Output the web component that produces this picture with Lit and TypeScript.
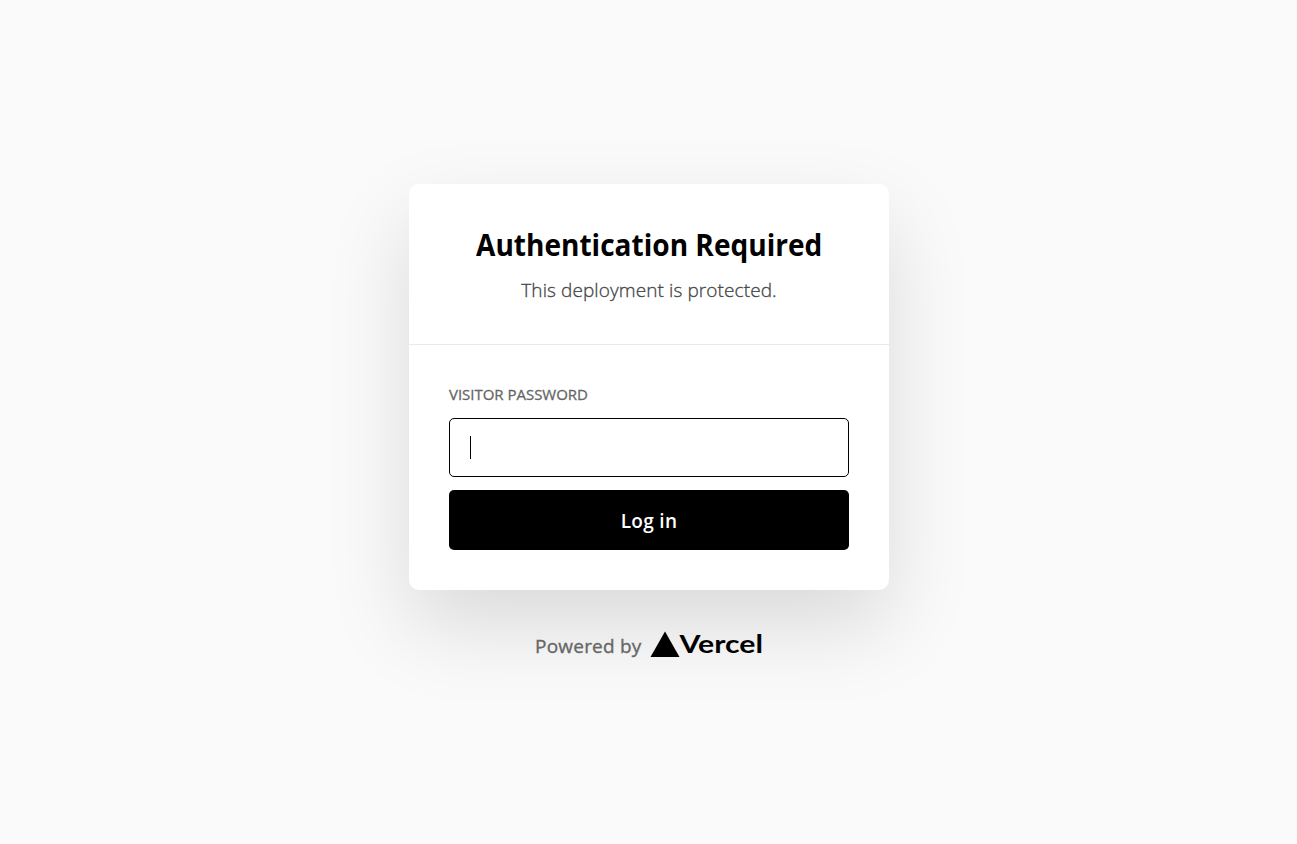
import { LitElement, html, css } from "lit";
import { customElement } from "lit/decorators.js";

@customElement("app-root")
export class AppRoot extends LitElement {
  static styles = css`
    :host {
      display: flex;
      flex-direction: column;
      align-items: center;
      box-sizing: border-box;
      width: 100%;
      height: 100vh;
      padding: 184px 0 0 1px;
      overflow: hidden;
      background: #fafafa;
      color: #000;
      font-family: "Segoe UI", "Open Sans", "Noto Sans", sans-serif;
    }
    .card {
      flex: none;
      width: 480px;
      height: 406px;
      border-radius: 10px;
      background: #fff;
      box-shadow: 0 36px 84px rgba(0, 0, 0, 0.13);
    }
    .head {
      box-sizing: border-box;
      height: 161px;
      padding-top: 39px;
      border-bottom: 1px solid #eaeaea;
      text-align: center;
      white-space: nowrap;
    }
    h1 {
      margin: 0;
      font-size: 30px;
      line-height: 44px;
      font-weight: 700;
    }
    .title {
      display: inline-block;
      transform: scaleX(0.935);
    }
    .sub {
      margin: 8px 0 0;
      font-size: 19px;
      line-height: 30px;
      font-weight: 300;
      letter-spacing: 0.1px;
      -webkit-text-stroke: 0.3px #444;
      color: #444;
    }
    form {
      display: flex;
      flex-direction: column;
      padding: 40px 40px 0;
    }
    label {
      height: 33px;
      font-size: 15px;
      line-height: 19px;
      letter-spacing: -0.02px;
      font-weight: 400;
      -webkit-text-stroke: 0.3px #666;
      color: #666;
    }
    .field {
      display: grid;
      align-items: center;
      height: 59px;
      margin-bottom: 13px;
    }
    .field > * {
      grid-area: 1 / 1;
    }
    input {
      box-sizing: border-box;
      width: 100%;
      height: 59px;
      margin: 0;
      padding: 0 20px;
      border: 1px solid #000;
      border-radius: 5px;
      outline: none;
      background: #fff;
      font: inherit;
      font-size: 18px;
      caret-color: transparent;
    }
    .caret {
      width: 1px;
      height: 23px;
      margin-left: 21px;
      background: #000;
    }
    button {
      height: 60px;
      padding: 2px 0 0;
      border: 0;
      border-radius: 5px;
      background: #000;
      color: #fff;
      font: inherit;
      font-size: 19px;
      font-weight: 600;
      letter-spacing: 0.3px;
    }
    .foot {
      display: flex;
      width: 228px;
      margin-top: 40px;
      white-space: nowrap;
    }
    .powered {
      flex: none;
      width: 115px;
      padding-top: 3px;
      font-size: 19px;
      line-height: 26px;
      letter-spacing: 0.22px;
      -webkit-text-stroke: 0.35px #666;
      color: #666;
    }
    .logo {
      flex: none;
      display: block;
      width: 114px;
      height: 30px;
      overflow: visible;
    }
    .word {
      font-family: Lato, sans-serif;
      font-size: 25px;
      font-weight: 700;
    }
  `;

  render() {
    return html`
      <main class="card">
        <header class="head">
          <h1><span class="title">Authentication Required</span></h1>
          <p class="sub">This deployment is protected.</p>
        </header>
        <form>
          <label for="pw">VISITOR PASSWORD</label>
          <div class="field">
            <input id="pw" type="password" />
            <span class="caret"></span>
          </div>
          <button type="button">Log in</button>
        </form>
      </main>
      <footer class="foot">
        <span class="powered">Powered by</span>
        <svg class="logo" viewBox="0 0 114 30">
          <path d="M15 1.5 L29.5 27 H0.5 Z" />
          <text class="word" x="29.5" y="22.5" textLength="83.5" lengthAdjust="spacingAndGlyphs">Vercel</text>
        </svg>
      </footer>
    `;
  }
}
